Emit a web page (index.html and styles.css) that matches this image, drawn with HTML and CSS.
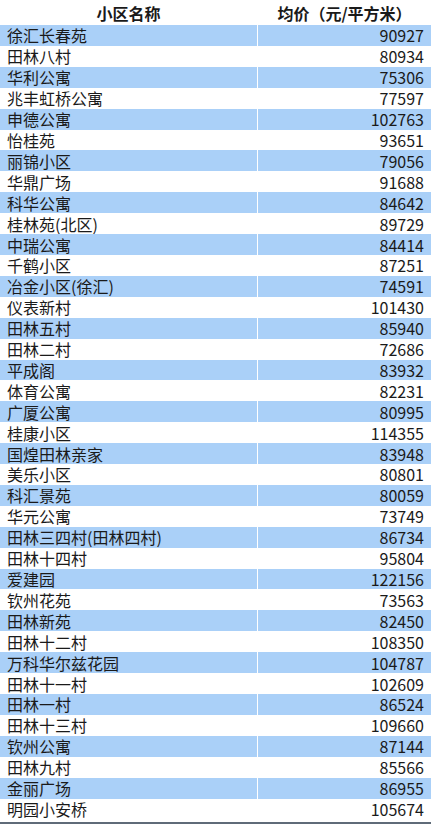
FILE: index.html
```html
<!DOCTYPE html>
<html lang="zh-CN">
<head>
<meta charset="utf-8">
<title>小区均价</title>
<link rel="stylesheet" href="styles.css">
</head>
<body>
<div class="sheet">
  <div class="row head"><div class="c name">小区名称</div><div class="c price">均价（元/平方米）</div></div>
  <div class="row odd"><div class="c name">徐汇长春苑</div><div class="c price">90927</div></div>
  <div class="row"><div class="c name">田林八村</div><div class="c price">80934</div></div>
  <div class="row odd"><div class="c name">华利公寓</div><div class="c price">75306</div></div>
  <div class="row"><div class="c name">兆丰虹桥公寓</div><div class="c price">77597</div></div>
  <div class="row odd"><div class="c name">申德公寓</div><div class="c price">102763</div></div>
  <div class="row"><div class="c name">怡桂苑</div><div class="c price">93651</div></div>
  <div class="row odd"><div class="c name">丽锦小区</div><div class="c price">79056</div></div>
  <div class="row"><div class="c name">华鼎广场</div><div class="c price">91688</div></div>
  <div class="row odd"><div class="c name">科华公寓</div><div class="c price">84642</div></div>
  <div class="row"><div class="c name">桂林苑(北区)</div><div class="c price">89729</div></div>
  <div class="row odd"><div class="c name">中瑞公寓</div><div class="c price">84414</div></div>
  <div class="row"><div class="c name">千鹤小区</div><div class="c price">87251</div></div>
  <div class="row odd"><div class="c name">冶金小区(徐汇)</div><div class="c price">74591</div></div>
  <div class="row"><div class="c name">仪表新村</div><div class="c price">101430</div></div>
  <div class="row odd"><div class="c name">田林五村</div><div class="c price">85940</div></div>
  <div class="row"><div class="c name">田林二村</div><div class="c price">72686</div></div>
  <div class="row odd"><div class="c name">平成阁</div><div class="c price">83932</div></div>
  <div class="row"><div class="c name">体育公寓</div><div class="c price">82231</div></div>
  <div class="row odd"><div class="c name">广厦公寓</div><div class="c price">80995</div></div>
  <div class="row"><div class="c name">桂康小区</div><div class="c price">114355</div></div>
  <div class="row odd"><div class="c name">国煌田林亲家</div><div class="c price">83948</div></div>
  <div class="row"><div class="c name">美乐小区</div><div class="c price">80801</div></div>
  <div class="row odd"><div class="c name">科汇景苑</div><div class="c price">80059</div></div>
  <div class="row"><div class="c name">华元公寓</div><div class="c price">73749</div></div>
  <div class="row odd"><div class="c name">田林三四村(田林四村)</div><div class="c price">86734</div></div>
  <div class="row"><div class="c name">田林十四村</div><div class="c price">95804</div></div>
  <div class="row odd"><div class="c name">爱建园</div><div class="c price">122156</div></div>
  <div class="row"><div class="c name">钦州花苑</div><div class="c price">73563</div></div>
  <div class="row odd"><div class="c name">田林新苑</div><div class="c price">82450</div></div>
  <div class="row"><div class="c name">田林十二村</div><div class="c price">108350</div></div>
  <div class="row odd"><div class="c name">万科华尔兹花园</div><div class="c price">104787</div></div>
  <div class="row"><div class="c name">田林十一村</div><div class="c price">102609</div></div>
  <div class="row odd"><div class="c name">田林一村</div><div class="c price">86524</div></div>
  <div class="row"><div class="c name">田林十三村</div><div class="c price">109660</div></div>
  <div class="row odd"><div class="c name">钦州公寓</div><div class="c price">87144</div></div>
  <div class="row"><div class="c name">田林九村</div><div class="c price">85566</div></div>
  <div class="row odd"><div class="c name">金丽广场</div><div class="c price">86955</div></div>
  <div class="row last"><div class="c name">明园小安桥</div><div class="c price">105674</div></div>
</div>
</body>
</html>
```

FILE: styles.css
```css
html, body {
  margin: 0;
  padding: 0;
  background: #ffffff;
}
body {
  font-family: "Noto Sans CJK SC", "Noto Sans", sans-serif;
  font-size: 16px;
  color: #1a1a1a;
  width: 431px;
}
.sheet {
  display: flex;
  flex-direction: column;
  border-bottom: 2px solid #5f6b78;
  padding-bottom: 3px;
}
.row {
  display: grid;
  grid-template-columns: 257px 1fr;
  column-gap: 1px;
  height: 20.92px;
}
.row.head {
  height: 25px;
  font-weight: bold;
}
.c {
  display: flex;
  align-items: center;
  padding: 0 7px;
  line-height: 20px;
  white-space: nowrap;
}
.head .c {
  line-height: 24px;
  justify-content: center;
}
.odd .c {
  background: #aad0f8;
}
.price {
  justify-content: flex-end;
}
.head .price {
  padding-right: 0;
  padding-left: 0;
}
```
